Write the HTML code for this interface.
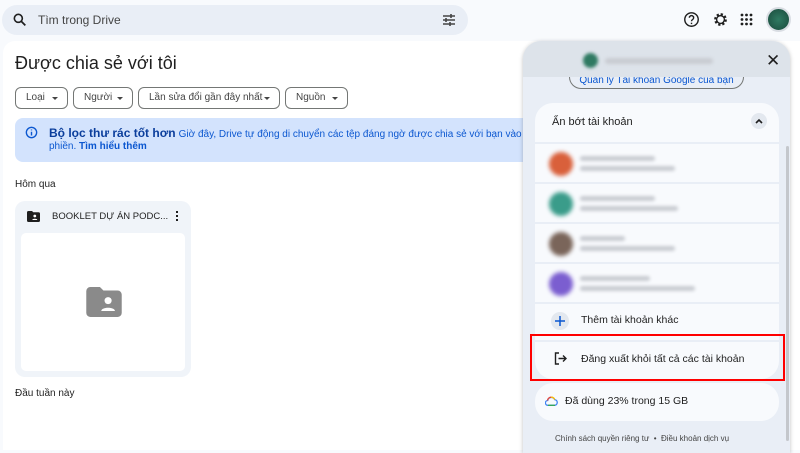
<!DOCTYPE html>
<html><head><meta charset="utf-8">
<style>
*{margin:0;padding:0;box-sizing:border-box}
body{width:800px;height:450px;overflow:hidden;background:#f8fafd;font-family:"Liberation Sans","Noto Sans CJK SC",sans-serif;color:#1f1f1f;position:relative}
.abs{position:absolute}
.search{left:2px;top:5px;width:466px;height:30px;background:#e9eef6;border-radius:16px}
.main{left:3px;top:41px;width:797px;height:409px;background:#fff;border-radius:12px 0 0 0}
.chip{position:absolute;top:87px;height:22px;border:1px solid #747775;border-radius:6px;font-size:10px;line-height:20px;padding-left:10px;color:#444;white-space:nowrap}
.chip:after{content:"";position:absolute;right:9px;top:9px;border:3px solid transparent;border-top:3px solid #444}
.banner{left:15px;top:118px;width:520px;height:44px;background:#d3e3fd;border-radius:8px}
.panel{left:523px;top:41px;width:267px;height:412px;background:#e9eef6;border-radius:18px 18px 0 0;box-shadow:0 1px 4px rgba(0,0,0,.25);overflow:hidden}
.row{position:absolute;left:12px;width:244px;background:#f8fafd}
.av{position:absolute;left:14px;top:8px;width:24px;height:24px;border-radius:50%;filter:blur(2px)}
.bl{position:absolute;background:#c9ccd2;filter:blur(1.5px);height:5px;border-radius:3px}
</style></head><body>
<div class="abs search"></div>
<svg class="abs" style="left:12px;top:12px" width="16" height="16" viewBox="0 0 24 24"><circle cx="9.5" cy="9.5" r="6" fill="none" stroke="#1f1f1f" stroke-width="2.4"/><path d="M14 14l6 6" stroke="#1f1f1f" stroke-width="2.6"/></svg>
<div class="abs" style="left:38px;top:13px;font-size:12px;color:#444">Tìm trong Drive</div>
<svg class="abs" style="left:442px;top:13px" width="14" height="14" viewBox="0 0 14 14" stroke="#444" stroke-width="1.4"><path d="M1 3h12M1 7h12M1 11h12"/><path d="M9 1v4M4 5v4M8 9v4" stroke-width="1.6"/></svg>
<svg class="abs" style="left:683px;top:11px" width="17" height="17" viewBox="0 0 24 24" fill="none" stroke="#1f1f1f" stroke-width="2"><circle cx="12" cy="12" r="9.5"/><path d="M9 9.5a3 3 0 1 1 4.5 2.6c-1 .6-1.5 1.2-1.5 2.4"/><path d="M12 16.5v2"/></svg>
<svg class="abs" style="left:712px;top:11px" width="17" height="17" viewBox="0 0 24 24"><circle cx="12" cy="12" r="7" fill="none" stroke="#1f1f1f" stroke-width="4" stroke-dasharray="3 2.5"/><circle cx="12" cy="12" r="5.5" fill="none" stroke="#1f1f1f" stroke-width="2"/></svg>
<svg class="abs" style="left:740px;top:13px" width="13" height="13" viewBox="0 0 13 13" fill="#1f1f1f"><circle cx="2" cy="2" r="1.4"/><circle cx="6.5" cy="2" r="1.4"/><circle cx="11" cy="2" r="1.4"/><circle cx="2" cy="6.5" r="1.4"/><circle cx="6.5" cy="6.5" r="1.4"/><circle cx="11" cy="6.5" r="1.4"/><circle cx="2" cy="11" r="1.4"/><circle cx="6.5" cy="11" r="1.4"/><circle cx="11" cy="11" r="1.4"/></svg>
<div class="abs" style="left:766px;top:7px;width:25px;height:25px;border-radius:50%;background:radial-gradient(#2f7a62,#1a4a3c);border:2px solid #d9dde3"></div>

<div class="abs main"></div>
<div class="abs" style="left:15px;top:53px;font-size:18px;color:#1f1f1f">Được chia sẻ với tôi</div>
<div class="chip" style="left:15px;width:53px">Loại</div>
<div class="chip" style="left:73px;width:60px">Người</div>
<div class="chip" style="left:138px;width:142px">Lần sửa đổi gần đây nhất&nbsp;&nbsp;&nbsp;</div>
<div class="chip" style="left:285px;width:63px">Nguồn</div>
<div class="abs banner"></div>
<svg class="abs" style="left:25px;top:126px" width="13" height="13" viewBox="0 0 24 24"><circle cx="12" cy="12" r="9.5" fill="none" stroke="#0b57d0" stroke-width="2.5"/><path d="M12 10.5v7M12 6.5v1.5" stroke="#0b57d0" stroke-width="2.6"/></svg>
<div class="abs" style="left:49px;top:126px;font-size:11px;color:#0b57d0;white-space:nowrap"><b style="font-size:12px;color:#0b3e9c">Bộ lọc thư rác tốt hơn</b> <span style="font-size:10px">Giờ đây, Drive tự động di chuyển các tệp đáng ngờ được chia sẻ với bạn vào thư mục thư</span></div>
<div class="abs" style="left:49px;top:141px;font-size:10px;color:#0b57d0">phiền. <b>Tìm hiểu thêm</b></div>
<div class="abs" style="left:15px;top:179px;font-size:10px">Hôm qua</div>

<div class="abs" style="left:15px;top:201px;width:176px;height:176px;background:#f0f4f9;border-radius:10px"></div>
<div class="abs" style="left:21px;top:233px;width:164px;height:138px;background:#fff;border-radius:5px"></div>
<svg class="abs" style="left:27px;top:211px" width="13" height="11" viewBox="0 0 13 11"><path d="M0 1.5a1.5 1.5 0 0 1 1.5-1.5H5l1.3 1.3h5.2A1.5 1.5 0 0 1 13 2.8V9.5A1.5 1.5 0 0 1 11.5 11h-10A1.5 1.5 0 0 1 0 9.5z" fill="#1f1f1f"/><circle cx="7.8" cy="5" r="1.4" fill="#fff"/><path d="M5.3 9c0-1.6 5-1.6 5 0z" fill="#fff"/></svg>
<div class="abs" style="left:52px;top:211px;font-size:9.5px;color:#1f1f1f">BOOKLET DỰ ÁN PODC...</div>
<div class="abs" style="left:176px;top:211px;width:2px;height:2px;background:#1f1f1f;box-shadow:0 4px #1f1f1f,0 8px #1f1f1f"></div>
<svg class="abs" style="left:86px;top:287px" width="36" height="30" viewBox="0 0 13 11"><path d="M0 1.5a1.5 1.5 0 0 1 1.5-1.5H5l1.3 1.3h5.2A1.5 1.5 0 0 1 13 2.8V9.5A1.5 1.5 0 0 1 11.5 11h-10A1.5 1.5 0 0 1 0 9.5z" fill="#8a8a8a"/><circle cx="8" cy="5" r="1.3" fill="#fff"/><path d="M5.5 8.8c0-1.6 5-1.6 5 0z" fill="#fff"/></svg>
<div class="abs" style="left:15px;top:388px;font-size:10px">Đầu tuần này</div>

<div class="abs panel">
  <div class="abs" style="left:46px;top:20px;width:175px;height:28px;border:1px solid #747775;border-top:none;border-radius:0 0 12px 12px;font-size:10px;color:#0b57d0;text-align:center;line-height:12px;padding-top:14px;overflow:hidden">Quản lý Tài khoản Google của bạn</div>
  <div class="abs" style="left:0;top:0;width:267px;height:36px;background:#dde3ea"></div>
  <div class="abs" style="left:60px;top:12px;width:15px;height:15px;border-radius:50%;background:#2f7a62;filter:blur(1.5px)"></div>
  <div class="bl" style="left:82px;top:17px;width:108px;height:6px"></div>
  <div class="abs" style="left:243px;top:10px;font-size:17px;color:#1f1f1f">✕</div>
  <div class="row" style="top:62px;height:39px;border-radius:18px 18px 0 0"></div>
  <div class="abs" style="left:29px;top:75px;font-size:11px">Ẩn bớt tài khoản</div>
  <div class="abs" style="left:228px;top:72px;width:16px;height:16px;border-radius:50%;background:#e3e8ef"></div>
  <svg class="abs" style="left:232px;top:77px" width="8" height="6" viewBox="0 0 8 6"><path d="M1 5l3-3 3 3" fill="none" stroke="#1f1f1f" stroke-width="1.6"/></svg>
  <div class="row" style="top:103px;height:38px"><div class="av" style="background:#d9603b"></div><div class="bl" style="left:45px;top:12px;width:75px"></div><div class="bl" style="left:45px;top:22px;width:95px"></div></div>
  <div class="row" style="top:143px;height:38px"><div class="av" style="background:#3a9c8a"></div><div class="bl" style="left:45px;top:12px;width:75px"></div><div class="bl" style="left:45px;top:22px;width:98px"></div></div>
  <div class="row" style="top:183px;height:38px"><div class="av" style="background:#7a655a"></div><div class="bl" style="left:45px;top:12px;width:45px"></div><div class="bl" style="left:45px;top:22px;width:95px"></div></div>
  <div class="row" style="top:223px;height:38px"><div class="av" style="background:#7b5ed0"></div><div class="bl" style="left:45px;top:12px;width:70px"></div><div class="bl" style="left:45px;top:22px;width:115px"></div></div>
  <div class="row" style="top:263px;height:36px"></div>
  <div class="abs" style="left:28px;top:271px;width:18px;height:18px;border-radius:50%;background:#e3e8ef"></div>
  <svg class="abs" style="left:31px;top:274px" width="12" height="12" viewBox="0 0 12 12"><path d="M6 1v10M1 6h10" stroke="#0b57d0" stroke-width="1.5"/></svg>
  <div class="abs" style="left:58px;top:273px;font-size:10.5px">Thêm tài khoản khác</div>
  <div class="row" style="top:301px;height:37px;border-radius:0 0 18px 18px"></div>
  <svg class="abs" style="left:31px;top:311px" width="13" height="13" viewBox="0 0 13 13" fill="none" stroke="#1f1f1f" stroke-width="1.4"><path d="M5 1H1.5v11H5M4.5 6.5H12M9 3.5l3 3-3 3"/></svg>
  <div class="abs" style="left:58px;top:312px;font-size:10.5px">Đăng xuất khỏi tất cả các tài khoản</div>
  <div class="row" style="top:342px;height:38px;border-radius:18px"></div>
  <svg class="abs" style="left:22px;top:355px" width="13" height="10" viewBox="0 0 13 10"><path d="M3 9.3a2.4 2.4 0 0 1-.3-4.8A3.7 3.7 0 0 1 9.7 3.6a2.9 2.9 0 0 1 .3 5.7z" fill="none" stroke="#4285f4" stroke-width="1.3"/><path d="M2.5 4.5A3.7 3.7 0 0 1 6 1.2" fill="none" stroke="#ea4335" stroke-width="1.3"/><path d="M6 1.2A3.7 3.7 0 0 1 9.7 3.6" fill="none" stroke="#fbbc04" stroke-width="1.3"/><path d="M10 9.3H3" stroke="#34a853" stroke-width="1.3"/></svg>
  <div class="abs" style="left:42px;top:354px;font-size:10.5px">Đã dùng 23% trong 15 GB</div>
  <div class="abs" style="left:32px;top:393px;font-size:8px;color:#444">Chính sách quyền riêng tư &nbsp;•&nbsp; Điều khoản dịch vụ</div>
  <div class="abs" style="left:263px;top:105px;width:3px;height:295px;background:#c4c7cc;border-radius:2px"></div>
</div>
<div class="abs" style="left:531px;top:335px;width:253px;height:45px;outline:2px solid #ff0000;outline-offset:-1px"></div>
</body></html>
